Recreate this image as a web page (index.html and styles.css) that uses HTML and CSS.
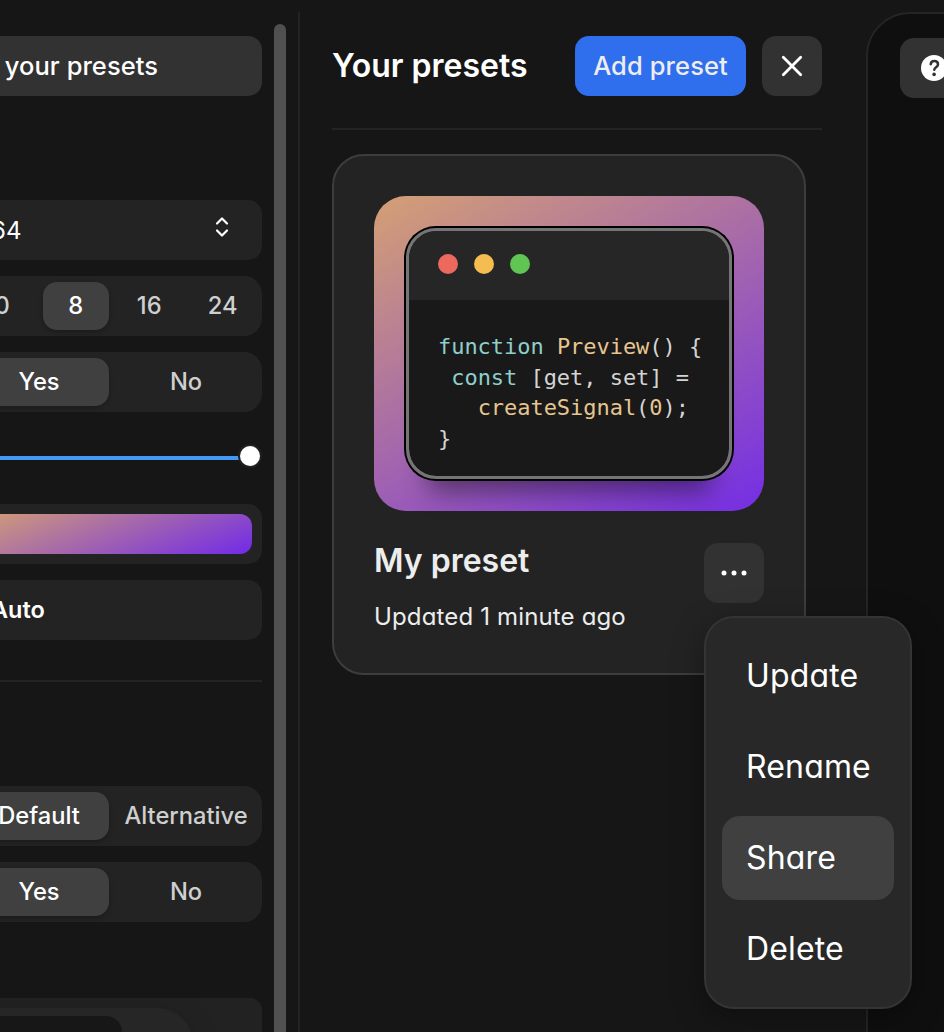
FILE: index.html
```
<!DOCTYPE html>
<html lang="en">
<head>
<meta charset="utf-8">
<title>Your presets</title>
<link rel="stylesheet" href="styles.css">
</head>
<body>
<div class="app">
  <aside class="sidebar">
    <div class="settings">
      <button class="presets-button">Show your presets</button>
      <div class="select">
        <span class="select-value">64</span>
        <svg class="select-icon" width="16" height="22" viewBox="0 0 16 22" fill="none" stroke="#fff" stroke-width="2.2" stroke-linecap="round" stroke-linejoin="round"><path d="M3 7.5 8 2.5l5 5M3 14.5l5 5 5-5"/></svg>
      </div>
      <div class="segmented four"><span>0</span><span class="on">8</span><span>16</span><span>24</span></div>
      <div class="segmented"><span class="on">Yes</span><span>No</span></div>
      <div class="slider"><div class="track"></div><div class="thumb"></div></div>
      <div class="color-field"><div class="swatch"></div></div>
      <div class="auto-field">Auto</div>
      <hr class="divider">
      <div class="segmented"><span class="on">Default</span><span>Alternative</span></div>
      <div class="segmented"><span class="on">Yes</span><span>No</span></div>
      <div class="theme-box"><div class="theme-window"><div class="theme-code"></div></div></div>
    </div>
    <div class="scrollbar"></div>
  </aside>

  <section class="presets">
    <header class="presets-header">
      <h1>Your presets</h1>
      <button class="add-button">Add preset</button>
      <button class="icon-button" aria-label="Close">
        <svg width="24" height="24" viewBox="0 0 24 24" stroke="#fff" stroke-width="2.8" stroke-linecap="round"><path d="M3.3 3.3l17.4 17.4M20.7 3.3 3.3 20.7"/></svg>
      </button>
    </header>
    <article class="card">
      <div class="preview">
        <div class="window">
          <div class="titlebar"><i class="dot red"></i><i class="dot yellow"></i><i class="dot green"></i></div>
          <div class="code">
            <div><b>function</b> <em>Preview</em>() {</div>
            <div> <b>const</b> [get, set] =</div>
            <div>   <em>createSignal</em>(<em>0</em>);</div>
            <div>}</div>
          </div>
        </div>
      </div>
      <div class="card-footer">
        <div>
          <h2>My preset</h2>
          <p class="updated">Updated 1 minute ago</p>
        </div>
        <div class="more">
          <button class="icon-button" aria-label="More">
            <svg width="30" height="8" viewBox="0 0 30 8" fill="#fff"><circle cx="5" cy="4" r="2.5"/><circle cx="15" cy="4" r="2.5"/><circle cx="25" cy="4" r="2.5"/></svg>
          </button>
          <ul class="menu">
            <li>Update</li>
            <li>Rename</li>
            <li class="active">Share</li>
            <li>Delete</li>
          </ul>
        </div>
      </div>
    </article>
  </section>

  <main class="canvas">
    <button class="help-button" aria-label="Help">
      <svg width="28" height="28" viewBox="0 0 28 28"><circle cx="14" cy="14" r="13" fill="#fff"/><path d="M10.7 10.2c.3-2 1.6-3.1 3.6-3.1s3.7 1.2 3.7 3.3c0 2.7-3.7 2.8-3.7 5.3" fill="none" stroke="#323232" stroke-width="2.5" stroke-linecap="round"/><circle cx="14.1" cy="20.4" r="1.8" fill="#323232"/></svg>
    </button>
  </main>
</div>
</body>
</html>
```
FILE: styles.css
```
* { box-sizing: border-box; }
body {
  margin: 0;
  height: 1032px;
  overflow: hidden;
  background: #161616;
  color: #fff;
  font-family: Inter, sans-serif;
}
h1, h2, p, ul { margin: 0; padding: 0; }
button { border: 0; padding: 0; color: #fff; font: inherit; }

.app {
  display: grid;
  grid-template-columns: 300px 566px 1fr;
  height: 1032px;
  padding-top: 12px;
  overflow: hidden;
}

.sidebar {
  display: flex;
  gap: 12px;
  height: 1020px;
  border-right: 2px solid #232323;
  overflow: hidden;
}
.settings {
  flex: none;
  width: 299px;
  margin-left: -37px;
  padding-top: 24px;
}
.scrollbar {
  flex: none;
  width: 12px;
  margin-top: 12px;
  border-radius: 6px 6px 0 0;
  background: #505050;
}
.presets-button {
  display: flex;
  align-items: center;
  justify-content: flex-end;
  width: 299px;
  height: 60px;
  padding: 0 104px 2px 0;
  border-radius: 14px;
  background: #323232;
  font-size: 25.5px;
  font-weight: 500;
  letter-spacing: .05px;
  white-space: nowrap;
}
.select {
  display: flex;
  align-items: center;
  justify-content: space-between;
  height: 60px;
  margin-top: 104px;
  padding: 0 32px 0 28px;
  border-radius: 14px;
  background: #232323;
  font-size: 24px;
}
.select-icon { margin-bottom: 6px; }
.segmented {
  display: grid;
  grid-template-columns: 1fr 1fr;
  gap: 7px;
  height: 60px;
  margin-top: 16px;
  padding: 6px;
  border-radius: 18px;
  background: #232323;
  color: #cfcfcf;
  font-size: 23.7px;
  font-weight: 500;
}
.segmented.four { grid-template-columns: repeat(4, 1fr); }
.segmented span {
  display: flex;
  align-items: center;
  justify-content: center;
  padding-bottom: 1px;
  border-radius: 14px;
}
.segmented .on {
  background: #404040;
  color: #fff;
  box-shadow: 0 2px 4px rgba(0, 0, 0, .25);
}
.slider {
  display: flex;
  align-items: center;
  height: 60px;
  margin-top: 16px;
}
.track { flex: 1; height: 4px; background: #4499f7; }
.thumb {
  width: 20px;
  height: 20px;
  margin: 0 2px 4px 0;
  border-radius: 50%;
  background: #fff;
  box-shadow: 0 0 0 2px #202020;
}
.color-field {
  height: 60px;
  margin-top: 16px;
  padding: 10px;
  border-radius: 14px;
  background: #232323;
}
.swatch {
  height: 40px;
  border-radius: 12px;
  background: linear-gradient(158deg, #d4a074, #712ae8);
}
.auto-field {
  display: flex;
  align-items: center;
  height: 60px;
  margin-top: 16px;
  padding: 0 0 2px 28px;
  border-radius: 14px;
  background: #232323;
  font-size: 23.5px;
  font-weight: 600;
}
.divider {
  height: 2px;
  margin: 40px 0 104px;
  border: 0;
  background: #242424;
}
.theme-box {
  height: 80px;
  margin-top: 76px;
  padding-top: 10px;
  border-radius: 12px;
  background: #222;
  overflow: hidden;
}
.theme-window {
  width: 230px;
  height: 90px;
  padding-top: 8px;
  border-radius: 36px;
  background: #262626;
  box-shadow: 0 0 30px rgba(0, 0, 0, .1);
}
.theme-code {
  width: 159px;
  height: 80px;
  border-radius: 16px;
  background: #171717;
}

.presets { padding: 24px 44px 0 32px; }
.presets-header {
  display: flex;
  align-items: center;
  gap: 16px;
  height: 94px;
  padding-bottom: 32px;
  border-bottom: 2px solid #242424;
}
.presets-header h1 {
  flex: 1;
  padding-bottom: 1px;
  font-size: 32px;
  font-weight: 600;
  white-space: nowrap;
}
.add-button {
  width: 171px;
  height: 60px;
  padding-bottom: 2px;
  border-radius: 14px;
  background: #2f6fed;
  color: #ededed;
  font-size: 25.5px;
  font-weight: 500;
  letter-spacing: .1px;
}
.icon-button,
.help-button {
  display: flex;
  flex: none;
  align-items: center;
  justify-content: center;
  width: 60px;
  height: 60px;
  border-radius: 14px;
  background: #323232;
}
.help-button { width: 68px; }
.card {
  width: 474px;
  height: 521px;
  margin-top: 24px;
  padding: 40px;
  border: 2px solid #3d3d3d;
  border-radius: 32px;
  background: #232323;
}
.preview {
  height: 315px;
  padding: 32px;
  border-radius: 32px;
  background: linear-gradient(150deg, #d4a074, #712ae8 103%);
}
.window {
  height: 251px;
  border: 3px solid #757575;
  border-radius: 30px;
  background: #191919;
  background-clip: padding-box;
  box-shadow: 0 0 0 2px #000, 0 34px 26px -22px rgba(0, 0, 0, .45);
  overflow: hidden;
}
.titlebar {
  display: flex;
  align-items: center;
  gap: 16px;
  height: 69px;
  padding: 0 29px 3px;
  background: #262626;
}
.dot { width: 20px; height: 20px; border-radius: 50%; }
.red { background: #ed695e; }
.yellow { background: #f5bd4f; }
.green { background: #61c554; }
.code {
  padding: 32px 0 0 29px;
  color: #d4d4d4;
  font: 22px/30.6px "DejaVu Sans Mono", monospace;
  letter-spacing: -.04px;
}
.code div { white-space: pre; }
.code b { color: #8fcfca; font-weight: 400; }
.code em { color: #e5c590; font-style: normal; }
.card-footer {
  display: flex;
  justify-content: space-between;
  padding-top: 32px;
}
.card-footer h2 {
  color: #ededed;
  font-size: 32px;
  font-weight: 600;
  line-height: 36px;
}
.updated {
  margin-top: 23px;
  color: #ededed;
  font-size: 24px;
  line-height: 30px;
  letter-spacing: .15px;
  font-feature-settings: "cv11";
}
.more { position: relative; }
.menu {
  position: absolute;
  z-index: 2;
  top: 73px;
  left: 0;
  display: grid;
  gap: 7px;
  width: 208px;
  height: 393px;
  padding: 16px;
  border: 2px solid #343434;
  border-radius: 30px;
  background: #282828;
  box-shadow: 0 8px 32px rgba(0, 0, 0, .35);
  list-style: none;
}
.menu li {
  display: flex;
  align-items: center;
  padding: 0 0 2px 24px;
  border-radius: 18px;
  font-size: 32px;
  letter-spacing: .15px;
  font-feature-settings: "cv11";
}
.menu .active { background: #404040; }

.canvas {
  width: 120px;
  height: 1100px;
  padding: 24px 0 0 32px;
  border: 2px solid #252525;
  border-radius: 44px 0 0 0;
  background: #0f0f0f;
}
```
